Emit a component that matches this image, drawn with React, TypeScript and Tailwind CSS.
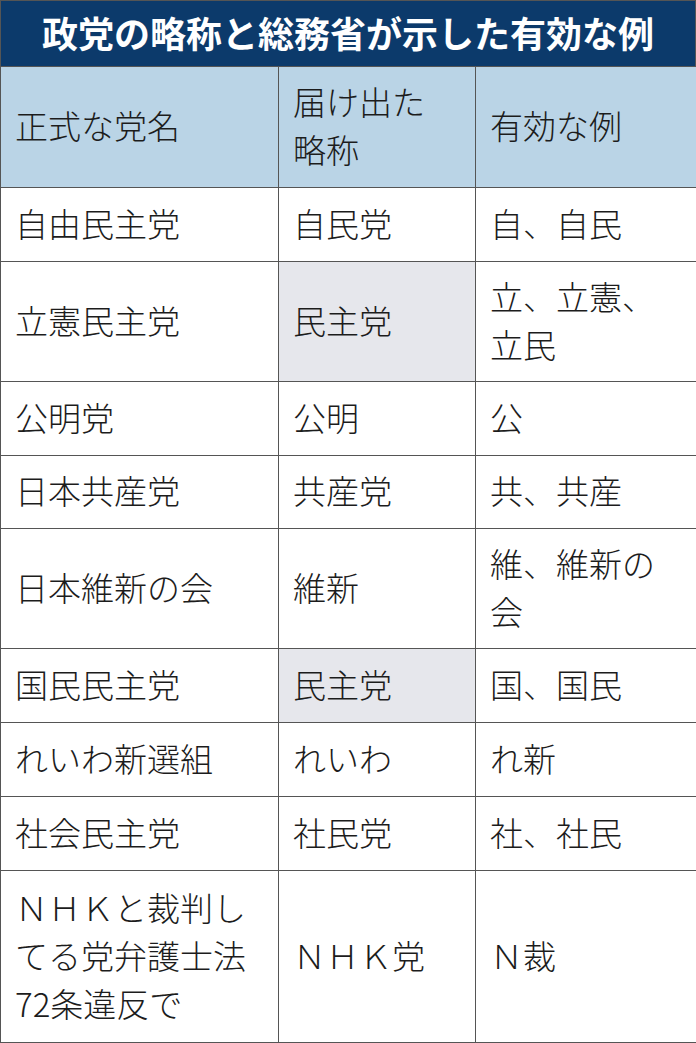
const rows: { name: string[]; abbr: string; examples: string[]; shaded?: boolean; h: string }[] = [
  { name: ["自由民主党"], abbr: "自民党", examples: ["自、自民"], h: "h-[74px]" },
  { name: ["立憲民主党"], abbr: "民主党", examples: ["立、立憲、", "立民"], shaded: true, h: "h-[120px]" },
  { name: ["公明党"], abbr: "公明", examples: ["公"], h: "h-[74px]" },
  { name: ["日本共産党"], abbr: "共産党", examples: ["共、共産"], h: "h-[73px]" },
  { name: ["日本維新の会"], abbr: "維新", examples: ["維、維新の", "会"], h: "h-[120px]" },
  { name: ["国民民主党"], abbr: "民主党", examples: ["国、国民"], shaded: true, h: "h-[74px]" },
  { name: ["れいわ新選組"], abbr: "れいわ", examples: ["れ新"], h: "h-[74px]" },
  { name: ["社会民主党"], abbr: "社民党", examples: ["社、社民"], h: "h-[74px]" },
  {
    name: ["ＮＨＫと裁判し", "てる党弁護士法", "72条違反で"],
    abbr: "ＮＨＫ党",
    examples: ["Ｎ裁"],
    h: "h-[172px]",
  },
];

function Lines({ lines }: { lines: string[] }) {
  return (
    <>
      {lines.map((l, i) => (
        <div key={i}>{l}</div>
      ))}
    </>
  );
}

const cell = "border border-[#555] pl-[14px] pb-[4px] align-middle";

export default function App() {
  return (
    <div
      className="w-[696px] h-[1043px] bg-white text-[#1c1c1c]"
      style={{ fontFamily: '"Noto Sans CJK JP", "Noto Sans", sans-serif' }}
    >
      <div className="border border-[#555] border-b-0">
        <div className="h-[65px] bg-[#0c3a6b] text-white text-[36px] font-bold flex items-center justify-center pb-[3px]">
          政党の略称と総務省が示した有効な例
        </div>
      </div>
      <table className="w-[696px] border-collapse table-fixed text-[33px] leading-[48px] font-light">
        <colgroup>
          <col className="w-[278px]" />
          <col className="w-[197px]" />
          <col className="w-[221px]" />
        </colgroup>
        <thead>
          <tr className="h-[121px] bg-[#bad4e6]">
            <th className={`${cell} font-light text-left`}>正式な党名</th>
            <th className={`${cell} font-light text-left`}>
              <Lines lines={["届け出た", "略称"]} />
            </th>
            <th className={`${cell} font-light text-left`}>有効な例</th>
          </tr>
        </thead>
        <tbody>
          {rows.map((r, i) => (
            <tr key={i} className={r.h}>
              <td className={cell}>
                <Lines lines={r.name} />
              </td>
              <td className={`${cell} ${r.shaded ? "bg-[#e6e7ec]" : ""}`}>{r.abbr}</td>
              <td className={cell}>
                <Lines lines={r.examples} />
              </td>
            </tr>
          ))}
        </tbody>
      </table>
    </div>
  );
}
